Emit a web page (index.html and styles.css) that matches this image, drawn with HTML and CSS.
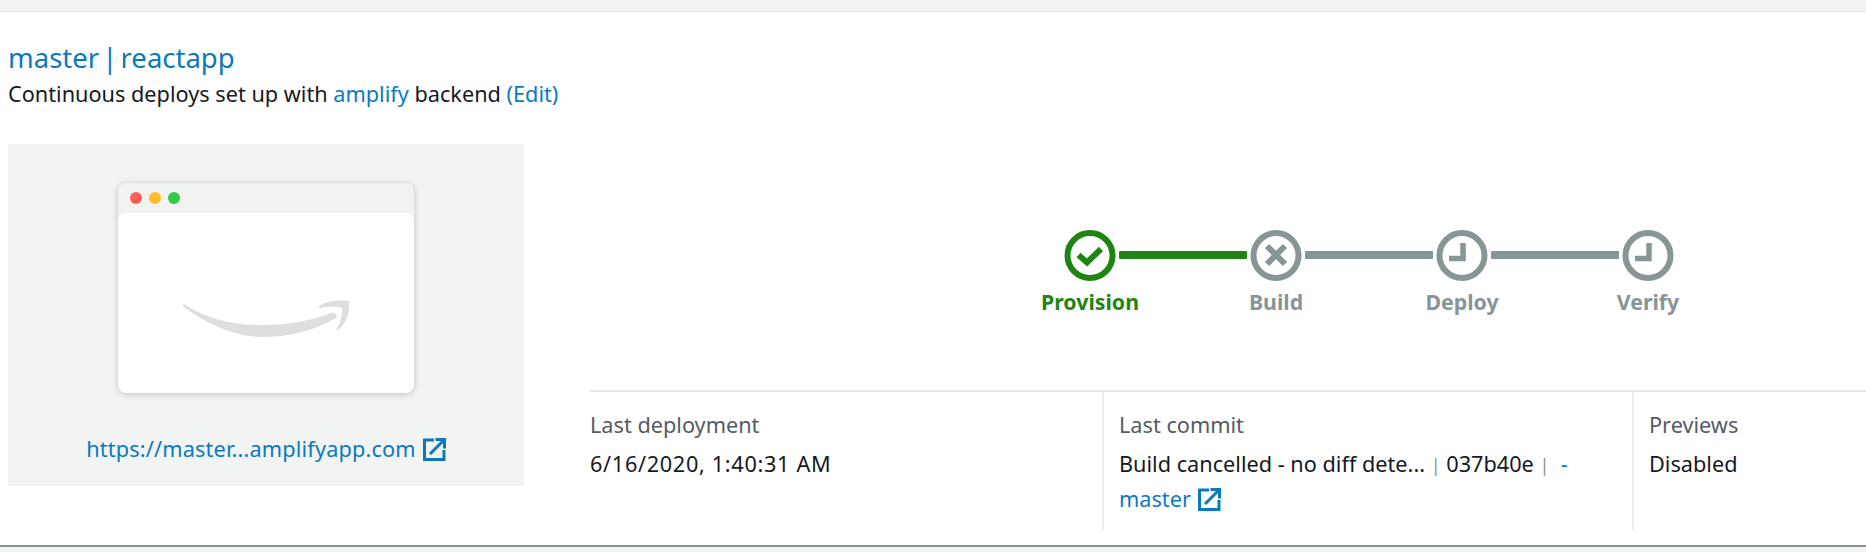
FILE: index.html
```html
<!DOCTYPE html>
<html lang="en">
<head>
<meta charset="utf-8">
<title>master | reactapp</title>
<link rel="stylesheet" href="styles.css">
</head>
<body>
<div class="strip"></div>
<main class="card">
  <header class="head">
    <a class="title">master | reactapp</a>
    <p class="sub">Continuous deploys set up with <a>amplify</a> backend <a>(Edit)</a></p>
  </header>
  <div class="content">
    <section class="preview">
      <div class="window">
        <div class="bar"><i class="dot red"></i><i class="dot yellow"></i><i class="dot green"></i></div>
        <div class="page">
          <svg class="smile" width="170" height="40" viewBox="0 0 170 40"><path d="M3 5C25 20 55 27 83 26C105 26 130 22 150 14C154 13 157 16 155 19C130 33 105 38 83 38C55 38 25 25 3 8C1 6 2 4 3 5Z"/><path d="M138 7C148 1 160 1 168 2C169 12 166 24 157 31C155 32 155 30 156 29C160 22 162 14 161 9C155 7 146 8 139 9C137 9 137 8 138 7Z"/></svg>
        </div>
      </div>
      <a class="url">https://master...amplifyapp.com<svg class="ext" viewBox="0 0 23 23"><path d="M11 2H1.500V21.500H21V12"/><path d="M7 16L20 3M12.500 1.500H21.500V10.500"/></svg></a>
    </section>
    <section class="detail">
      <div class="stepper">
        <div class="step done">
          <svg class="ring" viewBox="0 0 52 52"><circle cx="26" cy="25.500" r="22.500"/><path d="M14.500 25L23 32.500L37 19"/></svg>
          <span>Provision</span>
        </div>
        <div class="link done"></div>
        <div class="step">
          <svg class="ring" viewBox="0 0 52 52"><circle cx="26" cy="25.500" r="22.500"/><path d="M17 16L35 34M35 16L17 34"/></svg>
          <span>Build</span>
        </div>
        <div class="link"></div>
        <div class="step">
          <svg class="ring" viewBox="0 0 52 52"><circle cx="26" cy="25.500" r="22.500"/><path class="hand" d="M27 13V28.500H13"/></svg>
          <span>Deploy</span>
        </div>
        <div class="link"></div>
        <div class="step">
          <svg class="ring" viewBox="0 0 52 52"><circle cx="26" cy="25.500" r="22.500"/><path class="hand" d="M27 13V28.500H13"/></svg>
          <span>Verify</span>
        </div>
      </div>
      <div class="meta">
        <div class="cell">
          <div class="label">Last deployment</div>
          <div class="value stamp">6/16/2020, 1:40:31 AM</div>
        </div>
        <div class="cell">
          <div class="label">Last commit</div>
          <div class="value">Build cancelled - no diff dete... <span class="sep">|</span> 037b40e <span class="sep">|</span> &nbsp;<a>-<br>master<svg class="ext" viewBox="0 0 23 23"><path d="M11 2H1.500V21.500H21V12"/><path d="M7 16L20 3M12.500 1.500H21.500V10.500"/></svg></a></div>
        </div>
        <div class="cell">
          <div class="label">Previews</div>
          <div class="value">Disabled</div>
        </div>
      </div>
    </section>
  </div>
</main>
</body>
</html>
```
FILE: styles.css
```css
html, body { margin: 0; height: 552px; overflow: hidden; }
body { background: #f2f3f3; color: #16191f; font-family: "Noto Sans", Lato, sans-serif; font-size: 21.700px; }
a { color: #0b7abd; }
.strip { height: 11px; border-bottom: 1px solid #eaeded; }
.card { height: 533px; background: #fff; border-bottom: 2px solid #879596; box-sizing: content-box; }
.head { height: 132px; padding: 30px 0 0 8px; box-sizing: border-box; }
.title { display: block; font-size: 27.500px; line-height: 32px; word-spacing: -4px; }
.sub { margin: 6px 0 0; line-height: 28px; }
.content { display: flex; }
.preview { width: 516px; height: 342px; margin-left: 8px; background: #f2f3f3; display: flex; flex-direction: column; align-items: center; padding-top: 39px; box-sizing: border-box; }
.window { width: 296px; height: 210px; border-radius: 8px; background: #f2f2f2; box-shadow: 0 1px 6px rgba(0,0,0,.22); overflow: hidden; display: flex; flex-direction: column; flex: none; }
.bar { height: 30px; display: flex; align-items: center; gap: 7px; padding: 0 0 0 12px; flex: none; }
.dot { width: 12px; height: 12px; border-radius: 50%; }
.red { background: #ff5f57; }
.yellow { background: #ffbd2e; }
.green { background: #2fcb48; }
.page { flex: 1; background: #fff; border-radius: 8px; display: flex; justify-content: center; padding-top: 86px; box-sizing: border-box; }
.smile { display: block; fill: #dedede; }
.url { display: flex; align-items: center; margin-top: 43px; line-height: 26px; letter-spacing: 0.16px; }
.ext { width: 23px; height: 23px; fill: none; stroke: #0b7abd; stroke-width: 3; margin-left: 7px; flex: none; }
.detail { flex: 1; margin-left: 66px; display: flex; flex-direction: column; }
.stepper { display: flex; height: 246px; padding: 86px 0 0 474px; box-sizing: border-box; }
.step { width: 52px; display: flex; flex-direction: column; align-items: center; color: #879596; font-weight: 700; font-size: 21.300px; }
.step span { margin-top: 7px; line-height: 26px; white-space: nowrap; }
.step.done { color: #1f8512; }
.ring { width: 52px; height: 52px; flex: none; fill: none; stroke: currentColor; stroke-width: 6; display: block; }
.hand { stroke-width: 5.500; }
.link { width: 128px; height: 8px; margin: 21px 3px 0; background: #879596; border-radius: 1px; }
.link.done { background: #1f8512; }
.meta { display: grid; grid-template-columns: 512px 530px 1fr; height: 140px; border-top: 2px solid #e3e7e7; }
.cell { height: 138px; padding: 20px 0 0 15px; box-sizing: border-box; border-left: 2px solid #eaeded; }
.cell:first-child { border-left: 0; padding-left: 0; }
.label { color: #545b64; line-height: 26px; }
.value { margin-top: 9px; line-height: 33px; }
.stamp { letter-spacing: 0.67px; }
.value .ext { vertical-align: -4px; }
.sep { color: #879596; font-size: 18px; }
```
